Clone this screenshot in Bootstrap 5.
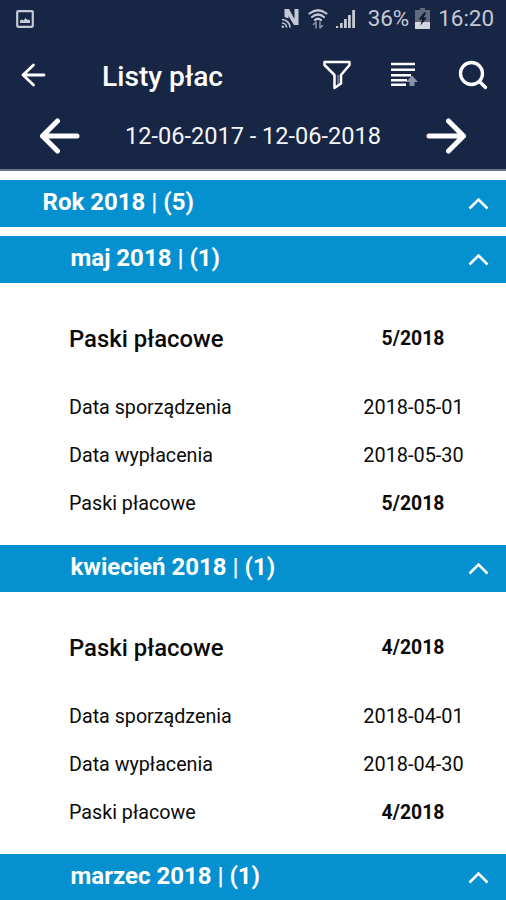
<!DOCTYPE html>
<html lang="pl">
<head>
<meta charset="utf-8">
<meta name="viewport" content="width=device-width, initial-scale=1">
<title>Listy płac</title>
<link href="https://cdn.jsdelivr.net/npm/bootstrap@5.3.0/dist/css/bootstrap.min.css" rel="stylesheet">
<style>
body{font-family:Roboto,"Liberation Sans",sans-serif;color:#0a0a0a;height:900px;overflow:hidden;line-height:1.2}
svg{display:block;flex:none}
.top-area{background:#182645;height:171px;border-bottom:2px solid #6b7387}
.status{height:38px;padding:0 12px 1px 16px;color:#c5c9d6;font-size:22.4px}
.pct{margin-left:12px}
.batt{margin:0 8px 0 6px}
.tools{height:74px;padding:0 18px 0 21px}
.tools h1{font-size:28.2px;font-weight:500;margin:4px 0 0 56px}
.mx-sort{margin:0 40px 0 39px}
.period{height:48px;padding:0 39px;font-size:23.55px;color:#f5f6fa}
.bar{background:#0590d0;height:47px;padding:0 17px 2px 70.5px;font-size:24px;font-weight:700;color:#fff;border:0;width:100%;text-align:left}
.bar svg{margin-top:2px}
.bar-year{padding-left:42.5px;margin:9px 0}
.panel{height:262px;padding:23px 0 17px 69px;font-size:19.7px}
.line{height:48px}
.line-title{height:66px;margin-bottom:12px;font-weight:500;font-size:23.9px}
.val{width:185px;text-align:center;font-size:19.9px}
.val.strong{font-weight:700;font-size:19.4px;width:186px}
</style>
<script src="https://cdn.jsdelivr.net/npm/bootstrap@5.3.0/dist/js/bootstrap.bundle.min.js"></script>
</head>
<body class="bg-white">
<header class="top-area text-white">
  <div class="status d-flex align-items-center">
    <svg width="18" height="18" viewBox="0 0 18 18"><rect x="1.2" y="1.2" width="15.6" height="15.6" rx="1" fill="none" stroke="#c5c9d6" stroke-width="2.2"/><path d="M4 13V10.500l2-1 1.500 1 2-2.500 2 2 1-.5 1.500 1V13z" fill="#c5c9d6"/></svg>
    <div class="d-flex align-items-center ms-auto">
      <svg class="me-n1" width="19" height="21" viewBox="0 0 19 21" fill="none" stroke="#c5c9d6"><path d="M3.500 9V1H8l5.500 10V1h4v16H13L7.500 8v2.500z" fill="#c5c9d6" stroke="none"/><path d="M1 11.500a8 8 0 0 1 8 8M1 15a4.500 4.500 0 0 1 4.500 4.500" stroke-width="1.700"/><circle cx="1.800" cy="18.700" r="1.200" fill="#c5c9d6" stroke="none"/></svg>
      <svg class="ms-2 me-2" width="20" height="20" viewBox="0 0 20 20" fill="none" stroke="#c5c9d6" stroke-width="2.200" stroke-linecap="round"><path d="M1.500 4.500q8.500-6.500 17 0M4 8q6-5 12 0M7 11q3-2.500 6 0"/><path d="M8 19v-6m-2.500 2.500L8 13M12 13v6m2.500-2.500L12 19" stroke="#8990a5" stroke-width="1.600"/></svg>
      <svg width="20" height="20" viewBox="0 0 20 20" fill="#c5c9d6"><path d="M0 17h2.200v2H0zM4 14h2.700v5H4zM8 10h2.800v9H8zM12 6h2.800v13H12zM16.200 1H19v18h-2.800z"/></svg>
      <span class="pct">36%</span>
      <svg class="batt" width="15" height="21" viewBox="0 0 15 21"><path d="M5 0h5v2h5v19H0V2h5z" fill="#626a80"/><path d="M0 14h15v7H0z" fill="#d3d6e0"/><path d="M9.500 4 3.500 11.500h3.500l-1.500 6 6.500-8H8.500L11 5z" fill="#111a30"/></svg>
      <span class="clock">16:20</span>
    </div>
  </div>
  <div class="tools d-flex align-items-center">
    <svg width="25" height="24" viewBox="0 0 25 24" fill="none" stroke="#fff" stroke-width="2.800" stroke-linecap="round" stroke-linejoin="round"><path d="M23 12H2M12.500 2 2 12l10.500 10"/></svg>
    <h1>Listy płac</h1>
    <div class="d-flex align-items-center ms-auto">
      <svg width="28" height="30" viewBox="0 0 28 30" fill="none" stroke="#fff" stroke-width="2.500" stroke-linejoin="round"><path d="M1.500 2h25v3l-8.500 10v8.500L11.500 28V15L1.500 5z"/><path d="M15 15v9" stroke="#818aa1" stroke-width="1.500"/></svg>
      <svg class="mx-sort" width="28" height="26" viewBox="0 0 28 26"><path d="M1 2h24M1 7.700h24M1 13.200h20M1 18.200h16M1 22.800h15" stroke="#fff" stroke-width="2.500"/><path d="m22 13.500 6 6.500h-3.500v4h-5v-4H16z" fill="#8b93a8"/></svg>
      <svg width="30" height="30" viewBox="0 0 30 30" fill="none" stroke="#fff" stroke-width="3.300" stroke-linecap="round"><circle cx="13.500" cy="13.500" r="11"/><path d="m22 22 5.500 5.500"/></svg>
    </div>
  </div>
  <div class="period d-flex align-items-center justify-content-between">
    <svg width="41" height="36" viewBox="0 0 41 36" fill="none" stroke="#fff" stroke-width="5" stroke-linecap="round" stroke-linejoin="round"><path d="M38 18H3.500M18.500 3 3.500 18l15 15"/></svg>
    <span>12-06-2017 - 12-06-2018</span>
    <svg width="41" height="36" viewBox="0 0 41 36" fill="none" stroke="#fff" stroke-width="5" stroke-linecap="round" stroke-linejoin="round"><path d="M3 18h34.500M22.500 3l15 15-15 15"/></svg>
  </div>
</header>
<main>
  <button class="bar bar-year d-flex align-items-center justify-content-between"><span>Rok 2018 | (5)</span><svg width="21" height="13" viewBox="0 0 21 13" fill="none" stroke="#fff" stroke-width="2.600"><path d="m1.500 11.500 9-9 9 9"/></svg></button>
  <button class="bar d-flex align-items-center justify-content-between"><span>maj 2018 | (1)</span><svg width="21" height="13" viewBox="0 0 21 13" fill="none" stroke="#fff" stroke-width="2.600"><path d="m1.500 11.500 9-9 9 9"/></svg></button>
  <section class="panel">
    <div class="line line-title d-flex align-items-center justify-content-between"><span>Paski płacowe</span><span class="val strong">5/2018</span></div>
    <div class="line d-flex align-items-center justify-content-between"><span>Data sporządzenia</span><span class="val">2018-05-01</span></div>
    <div class="line d-flex align-items-center justify-content-between"><span>Data wypłacenia</span><span class="val">2018-05-30</span></div>
    <div class="line d-flex align-items-center justify-content-between"><span>Paski płacowe</span><span class="val strong">5/2018</span></div>
  </section>
  <button class="bar d-flex align-items-center justify-content-between"><span>kwiecień 2018 | (1)</span><svg width="21" height="13" viewBox="0 0 21 13" fill="none" stroke="#fff" stroke-width="2.600"><path d="m1.500 11.500 9-9 9 9"/></svg></button>
  <section class="panel">
    <div class="line line-title d-flex align-items-center justify-content-between"><span>Paski płacowe</span><span class="val strong">4/2018</span></div>
    <div class="line d-flex align-items-center justify-content-between"><span>Data sporządzenia</span><span class="val">2018-04-01</span></div>
    <div class="line d-flex align-items-center justify-content-between"><span>Data wypłacenia</span><span class="val">2018-04-30</span></div>
    <div class="line d-flex align-items-center justify-content-between"><span>Paski płacowe</span><span class="val strong">4/2018</span></div>
  </section>
  <button class="bar d-flex align-items-center justify-content-between"><span>marzec 2018 | (1)</span><svg width="21" height="13" viewBox="0 0 21 13" fill="none" stroke="#fff" stroke-width="2.600"><path d="m1.500 11.500 9-9 9 9"/></svg></button>
</main>
</body>
</html>
